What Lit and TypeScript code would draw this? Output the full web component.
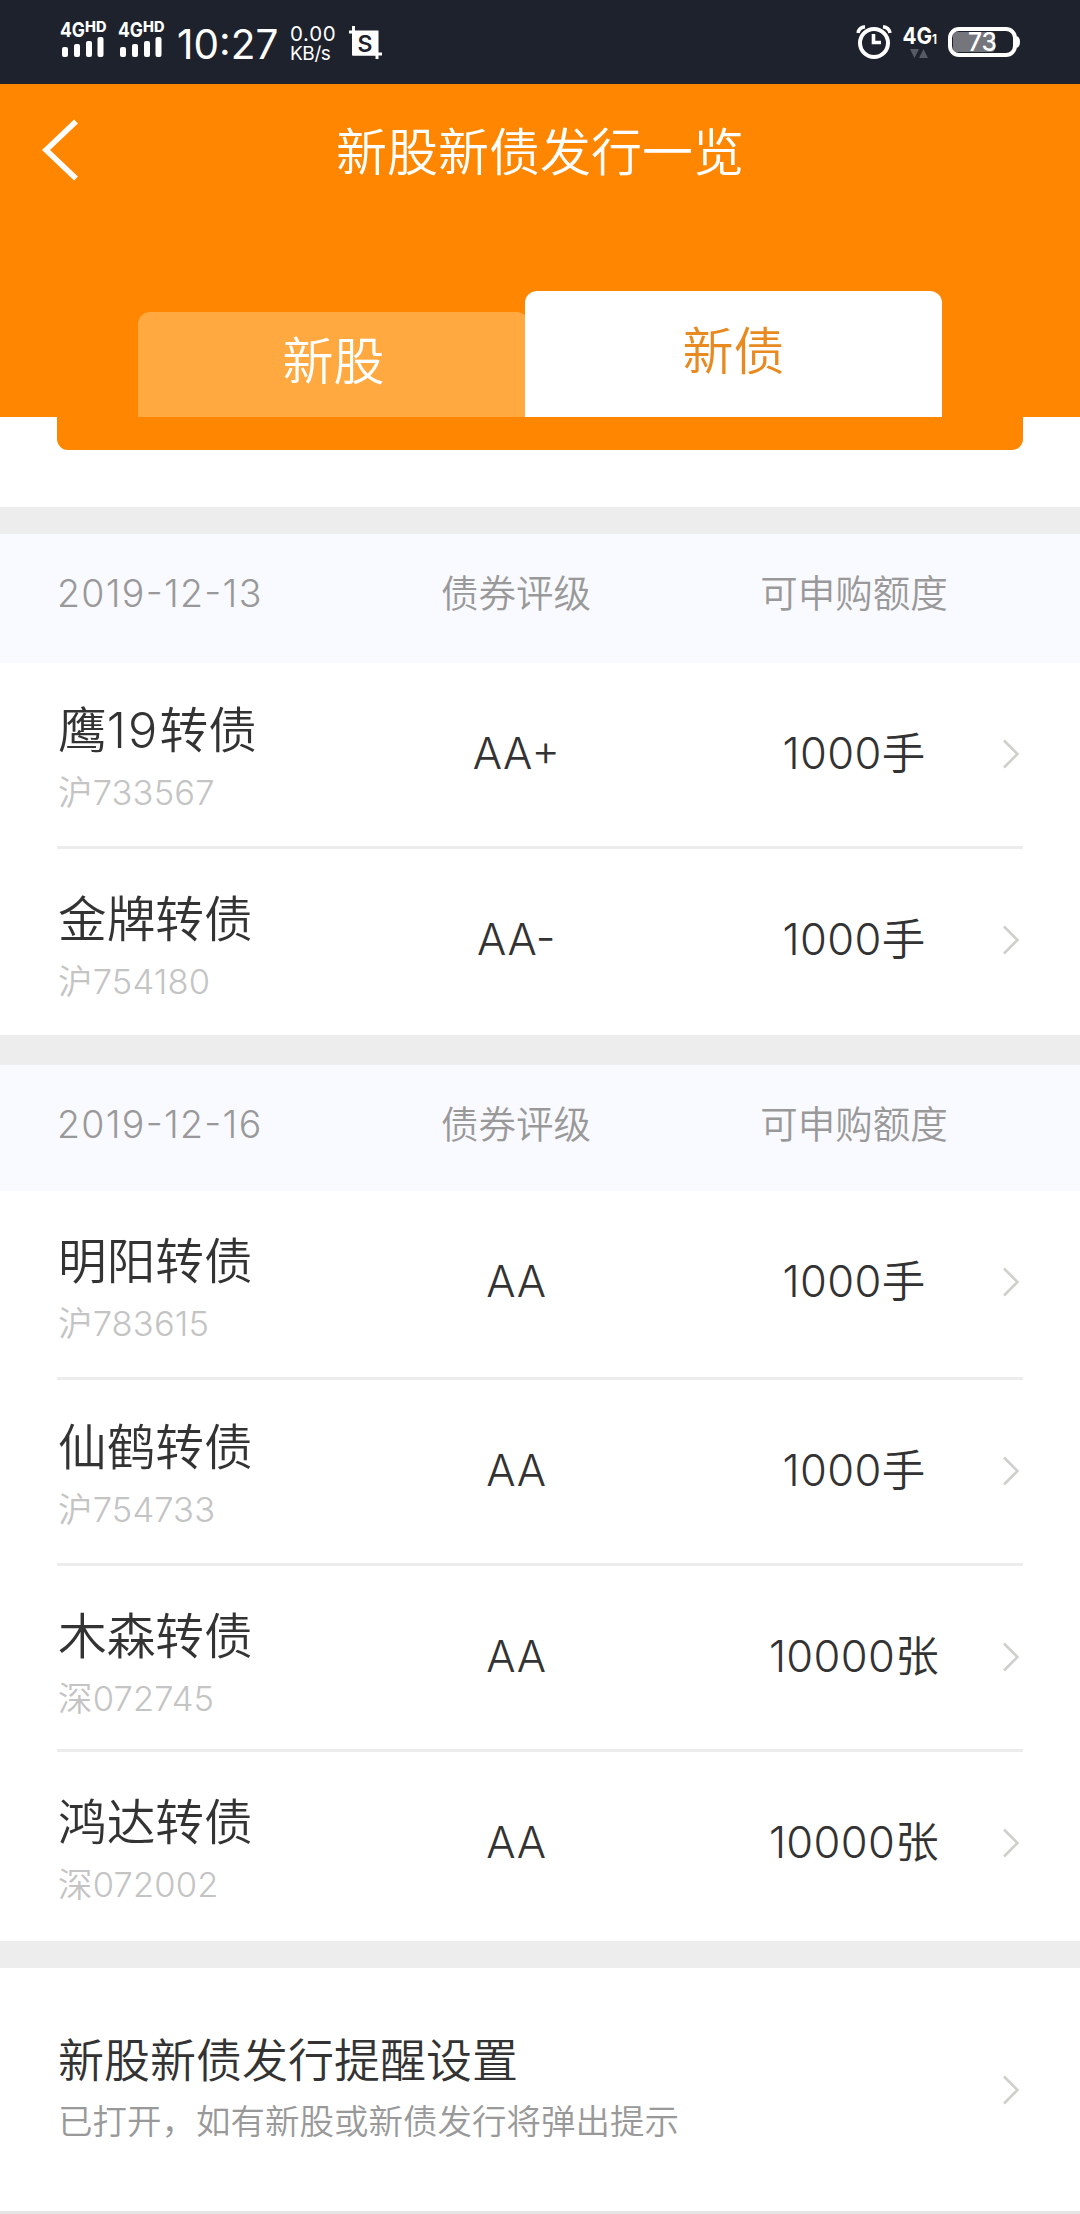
import { LitElement, html, css, svg } from "lit";
import { customElement, property } from "lit/decorators.js";

interface Bond {
  name: string;
  code: string;
  rating: string;
  quota: string;
}

interface BondGroup {
  date: string;
  bonds: Bond[];
}

const GROUPS: BondGroup[] = [
  {
    date: "2019-12-13",
    bonds: [
      { name: "鹰19转债", code: "沪733567", rating: "AA+", quota: "1000手" },
      { name: "金牌转债", code: "沪754180", rating: "AA-", quota: "1000手" },
    ],
  },
  {
    date: "2019-12-16",
    bonds: [
      { name: "明阳转债", code: "沪783615", rating: "AA", quota: "1000手" },
      { name: "仙鹤转债", code: "沪754733", rating: "AA", quota: "1000手" },
      { name: "木森转债", code: "深072745", rating: "AA", quota: "10000张" },
      { name: "鸿达转债", code: "深072002", rating: "AA", quota: "10000张" },
    ],
  },
];

const chevron = html`
  <svg width="22" height="30" viewBox="0 0 22 30" fill="none">
    <path d="M3 1.500 L16.500 15 L3 28.500" stroke="#cfcfcb" stroke-width="2.600" />
  </svg>
`;

/** Digits inside a bond name are set slightly looser than the Han characters. */
const spacedName = (name: string) =>
  name
    .split(/(\d+)/)
    .map((part) => (/^\d+$/.test(part) ? html`<span class="digits">${part}</span>` : part));

@customElement("status-bar")
export class StatusBar extends LitElement {
  static styles = css`
    :host {
      display: flex;
      align-items: flex-start;
      box-sizing: border-box;
      height: 84px;
      padding: 0 59px 0 59px;
      background: #1e222d;
      color: #fff;
      font-family: Inter, "Noto Sans CJK SC", sans-serif;
      font-weight: 400;
    }
    svg {
      display: block;
      flex: none;
    }
    text {
      fill: #fff;
      font-family: Inter, sans-serif;
    }
    .bold {
      font-weight: 700;
    }
    .heavy {
      font-weight: 800;
    }
    .dark {
      fill: #1e222d;
      font-weight: 600;
    }
    .signal {
      width: 58px;
    }
    .time {
      width: 113px;
      padding-left: 2px;
      font-size: 40.5px;
      line-height: 89px;
      letter-spacing: 0;
      white-space: nowrap;
    }
    .speed {
      width: 58px;
      padding-top: 24px;
      display: flex;
      flex-direction: column;
      white-space: nowrap;
    }
    .rate {
      font-size: 20.5px;
      line-height: 20px;
      letter-spacing: 0.7px;
    }
    .unit {
      font-size: 19px;
      line-height: 19px;
      letter-spacing: -0.4px;
    }
    .spacer {
      flex: 1;
    }
  `;

  private signal() {
    return svg`
      <svg class="signal" width="58" height="84" viewBox="0 0 58 84">
        <text class="bold" x="1" y="37" font-size="20.500" textLength="25" lengthAdjust="spacingAndGlyphs">4G</text>
        <text class="heavy" x="26" y="32" font-size="14" textLength="21.500" lengthAdjust="spacingAndGlyphs">HD</text>
        <g fill="#fff">
          <rect x="3" y="47" width="6" height="10" rx="2" />
          <rect x="15" y="44" width="6" height="13" rx="2" />
          <rect x="27" y="41" width="6" height="16" rx="2" />
          <rect x="38.500" y="37" width="6" height="20" rx="2" />
        </g>
      </svg>
    `;
  }

  render() {
    return html`
      ${this.signal()} ${this.signal()}
      <span class="time">10:27</span>
      <span class="speed">
        <span class="rate">0.00</span>
        <span class="unit">KB/s</span>
      </span>
      <svg width="36" height="84" viewBox="0 0 36 84">
        <path
          d="M1 32 H29 V59 M5.500 26 V54 H34"
          fill="none"
          stroke="#fff"
          stroke-width="3"
        />
        <rect x="5" y="31" width="25" height="24.500" fill="#fff" />
        <text class="dark" x="9.500" y="51.500" font-size="23">S</text>
      </svg>
      <span class="spacer"></span>
      <svg width="165" height="84" viewBox="856 0 165 84">
        <circle cx="874" cy="43" r="14" fill="none" stroke="#fff" stroke-width="4" />
        <path d="M873.500 34 V42.500 H881" fill="none" stroke="#fff" stroke-width="3.600" />
        <path
          d="M858 33 Q859 27.500 865 26.800 M890 33 Q889 27.500 883 26.800"
          fill="none"
          stroke="#fff"
          stroke-width="3.400"
        />
        <text class="bold" x="902.500" y="44" font-size="23.500" textLength="34.500" lengthAdjust="spacingAndGlyphs">4G<tspan font-size="13">1</tspan></text>
        <path d="M910 49 H919 L914.500 58 Z M919 58 H928 L923.500 49 Z" fill="#555a63" />
        <rect x="953" y="32" width="42" height="20" rx="4" fill="#74767c" />
        <rect x="950" y="29" width="65" height="26" rx="9" fill="none" stroke="#fff" stroke-width="4" />
        <path d="M1016.500 36 Q1020 37 1020 42 Q1020 47 1016.500 48 Z" fill="#fff" />
        <text x="968" y="51" font-size="25" font-weight="500" textLength="29" lengthAdjust="spacingAndGlyphs">73</text>
      </svg>
    `;
  }
}

@customElement("bond-group")
export class BondGroupView extends LitElement {
  @property({ attribute: false }) group!: BondGroup;

  static styles = css`
    :host {
      display: flex;
      flex-direction: column;
      color: #333;
    }
    .head,
    .row {
      display: grid;
      grid-template-columns: 290px 338px 316px 22px;
    }
    .head {
      padding: 0 57px;
      height: var(--head-height, 129px);
      background: #f9faff;
      color: #999;
      font-size: 37.5px;
      line-height: 119px;
      white-space: nowrap;
    }
    .rating {
      text-align: center;
    }
    .row .rating {
      padding-left: 1px;
      letter-spacing: 0.5px;
    }
    .row .quota {
      letter-spacing: 0.35px;
    }
    .quota {
      padding-left: 22px;
      text-align: center;
    }
    .date {
      letter-spacing: 1.3px;
    }
    .rows {
      display: flex;
      flex-direction: column;
      padding: 0 57px;
      background: #fff;
    }
    .row {
      box-sizing: border-box;
      height: 186px;
      white-space: nowrap;
      font-size: 43.5px;
      line-height: 181px;
      border-bottom: 3px solid #ececec;
    }
    .row:first-child {
      height: var(--first-height, 186px);
    }
    .row:last-child {
      border-bottom: none;
    }
    .bond {
      display: flex;
      flex-direction: column;
      padding-top: 38px;
      padding-left: 1px;
    }
    .row:first-child .bond {
      padding-top: var(--first-inset, 35px);
    }
    .row:nth-child(2) .bond {
      padding-top: var(--second-inset, 38px);
    }
    .name {
      font-size: 48.7px;
      line-height: 66px;
    }
    .digits {
      letter-spacing: 2.2px;
    }
    .code {
      color: #c4c4c4;
      font-size: 34.5px;
      line-height: 58px;
      letter-spacing: 0.15px;
    }
    .row svg {
      margin-top: 76px;
    }
  `;

  render() {
    const { date, bonds } = this.group;
    return html`
      <div class="head">
        <span class="date">${date}</span>
        <span class="rating">债券评级</span>
        <span class="quota">可申购额度</span>
      </div>
      <div class="rows">
        ${bonds.map(
          (b) => html`
            <div class="row">
              <div class="bond">
                <span class="name">${spacedName(b.name)}</span>
                <span class="code">${b.code}</span>
              </div>
              <span class="rating">${b.rating}</span>
              <span class="quota">${b.quota}</span>
              ${chevron}
            </div>
          `,
        )}
      </div>
    `;
  }
}

@customElement("app-root")
export class AppRoot extends LitElement {
  static styles = css`
    :host {
      display: flex;
      flex-direction: column;
      box-sizing: border-box;
      width: 1080px;
      height: 2214px;
      overflow: hidden;
      background: #fff;
      font-family: Inter, "Noto Sans CJK SC", sans-serif;
      font-weight: 350;
      font-feature-settings: "case";
    }
    .header {
      display: flex;
      flex-direction: column;
      height: 333px;
      background: #ff8600;
      color: #fff;
    }
    .nav {
      display: grid;
      grid-template-columns: 120px 1fr 120px;
      height: 132px;
    }
    .nav svg {
      margin: 35px 0 0 40px;
    }
    .title {
      font-size: 51px;
      line-height: 137px;
      text-align: center;
    }
    .tabs {
      display: flex;
      align-items: flex-end;
      justify-content: center;
      flex: 1;
      font-size: 51px;
      text-align: center;
    }
    .tab {
      box-sizing: border-box;
      width: 391px;
      height: 105px;
      margin-right: -4px;
      border-radius: 12px 12px 0 0;
      background: #ffa940;
      line-height: 99px;
    }
    .active {
      width: 417px;
      height: 126px;
      margin-right: 0;
      background: #fff;
      color: #e88a20;
      line-height: 122px;
    }
    .shelf {
      height: 33px;
      margin: 0 57px 57px;
      border-radius: 0 0 11px 11px;
      background: #ff8600;
    }
    .gap {
      height: 27px;
      background: #ededed;
    }
    .gap.wide {
      height: 30px;
    }
    .second {
      --head-height: 126px;
      --first-height: 189px;
      --first-inset: 38px;
      --second-inset: 35px;
      height: 876px;
    }
    .setting {
      display: flex;
      justify-content: space-between;
      box-sizing: border-box;
      height: 246px;
      padding: 59px 57px 0;
      border-bottom: 3px solid #e5e5e5;
    }
    .copy {
      display: flex;
      flex-direction: column;
      padding-left: 1px;
      white-space: nowrap;
    }
    .setting-title {
      color: #333;
      font-size: 46px;
      line-height: 66px;
    }
    .setting-note {
      color: #999;
      font-size: 34.5px;
      line-height: 57px;
    }
    .setting svg {
      margin-top: 48px;
    }
  `;

  render() {
    return html`
      <status-bar></status-bar>
      <header class="header">
        <div class="nav">
          <svg width="40" height="62" viewBox="0 0 40 62" fill="none">
            <path d="M36 2.500 L6 31 L36 59.500" stroke="#fff" stroke-width="5.500" />
          </svg>
          <span class="title">新股新债发行一览</span>
        </div>
        <div class="tabs">
          <div class="tab">新股</div>
          <div class="tab active">新债</div>
        </div>
      </header>
      <div class="shelf"></div>
      <div class="gap"></div>
      <bond-group .group=${GROUPS[0]}></bond-group>
      <div class="gap wide"></div>
      <bond-group class="second" .group=${GROUPS[1]}></bond-group>
      <div class="gap"></div>
      <div class="setting">
        <div class="copy">
          <span class="setting-title">新股新债发行提醒设置</span>
          <span class="setting-note">已打开，如有新股或新债发行将弹出提示</span>
        </div>
        ${chevron}
      </div>
    `;
  }
}
